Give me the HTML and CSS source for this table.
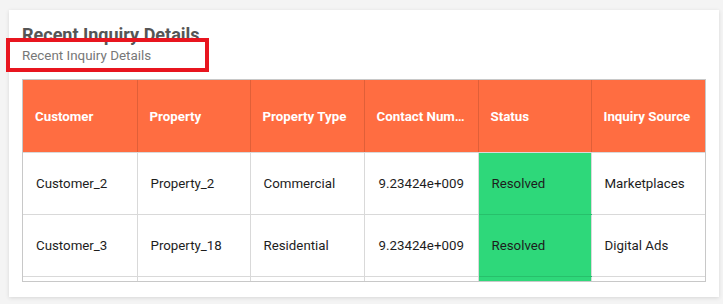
FILE: index.html
```html
<!DOCTYPE html>
<html>
<head>
<meta charset="utf-8">
<link rel="stylesheet" href="styles.css">
</head>
<body>
<div class="card">
  <div class="head">
    <div class="title">Recent Inquiry Details</div>
    <div class="subtitle">Recent Inquiry Details</div>
    <div class="highlight"></div>
  </div>
  <div class="grid">
    <table>
      <colgroup>
        <col class="c1"><col class="c2"><col class="c3"><col class="c4"><col class="c5"><col class="c6">
      </colgroup>
      <thead>
        <tr>
          <th>Customer</th>
          <th>Property</th>
          <th>Property Type</th>
          <th>Contact Number</th>
          <th>Status</th>
          <th>Inquiry Source</th>
        </tr>
      </thead>
      <tbody>
        <tr>
          <td>Customer_2</td>
          <td>Property_2</td>
          <td>Commercial</td>
          <td class="num">9.23424e+009</td>
          <td class="ok">Resolved</td>
          <td>Marketplaces</td>
        </tr>
        <tr>
          <td>Customer_3</td>
          <td>Property_18</td>
          <td>Residential</td>
          <td class="num">9.23424e+009</td>
          <td class="ok">Resolved</td>
          <td>Digital Ads</td>
        </tr>
        <tr class="partial">
          <td></td>
          <td></td>
          <td></td>
          <td class="num"></td>
          <td class="ok"></td>
          <td></td>
        </tr>
      </tbody>
    </table>
  </div>
</div>
</body>
</html>
```
FILE: styles.css
```css
html, body {
  margin: 0;
  padding: 0;
  background: #f4f4f4;
  font-family: Roboto, "Liberation Sans", sans-serif;
}
.card {
  margin: 10px 4px 7px 9px;
  width: 710px;
  height: 287px;
  box-sizing: border-box;
  background: #fff;
  box-shadow: 0 1px 4px rgba(0,0,0,0.12);
  padding: 14px 13px 0 13px;
}
.head {
  position: relative;
  height: 55px;
}
.title {
  font-size: 18px;
  font-weight: 700;
  color: #555;
  line-height: 21px;
}
.subtitle {
  font-size: 13.4px;
  color: #777;
  line-height: 15px;
  margin-top: 3px;
}
.highlight {
  position: absolute;
  left: -16px;
  top: 14px;
  width: 195px;
  height: 26px;
  border: 4px solid #e8151f;
}
.grid {
  border: 1px solid #c8c8c8;
  height: 201px;
  overflow: hidden;
}
table {
  border-collapse: collapse;
  table-layout: fixed;
  width: 683px;
}
.c1 { width: 114px; }
.c2 { width: 113px; }
.c3 { width: 114px; }
.c4 { width: 114px; }
.c5 { width: 113px; }
.c6 { width: 115px; }
th {
  background: #ff6d41;
  color: #fff;
  font-size: 13.3px;
  font-weight: 700;
  text-align: left;
  height: 72px;
  padding: 0 12px 0 12px;
  border-left: 1px solid #e05f38;
  border-bottom: 1px solid #d9d9d9;
  white-space: nowrap;
  overflow: hidden;
  text-overflow: ellipsis;
}
th:first-child, td:first-child { border-left: none; }
td {
  font-size: 13.3px;
  color: #1d1d1d;
  height: 61px;
  padding: 0 12px 0 13px;
  border-left: 1px solid #d9d9d9;
  border-bottom: 1px solid #d9d9d9;
  white-space: nowrap;
  overflow: hidden;
}
td.num { padding-left: 14px; }
td.ok {
  background: #2ed87a;
  border-bottom-color: #27c06b;
}
```
